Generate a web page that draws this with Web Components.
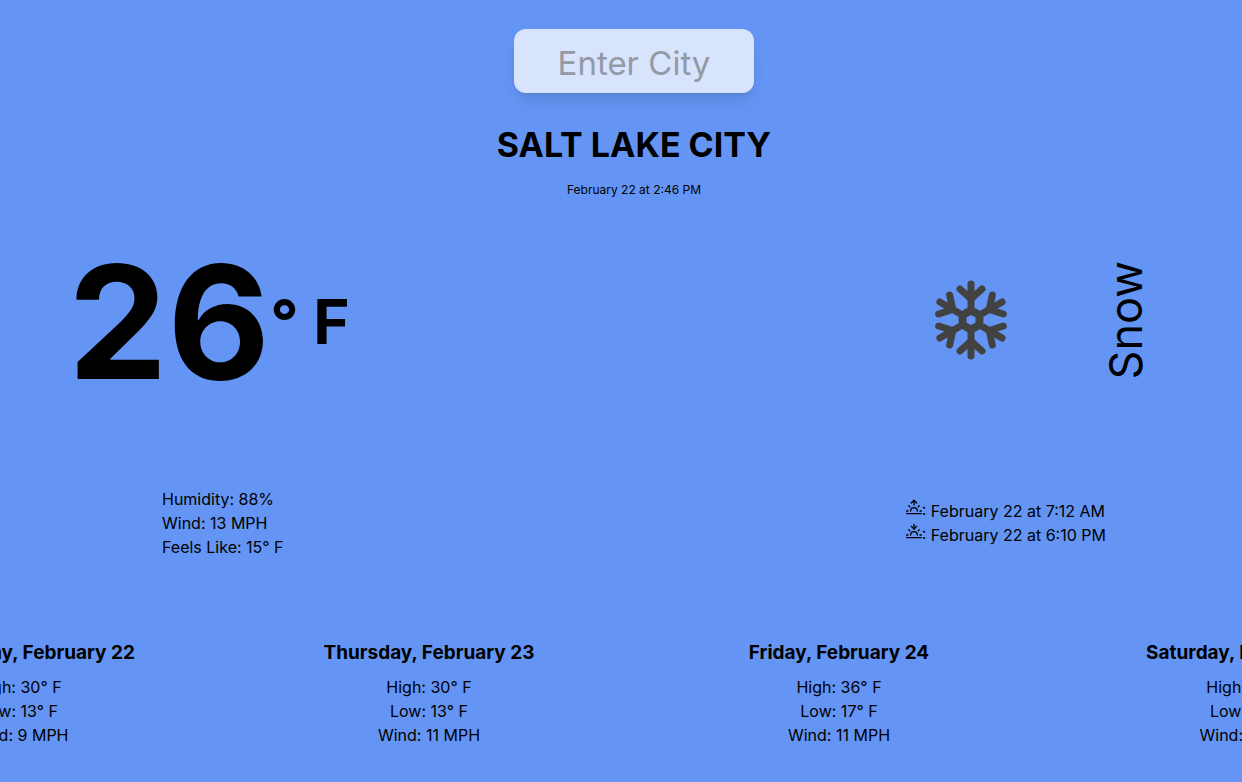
<!DOCTYPE html>
<html lang="en">
<head>
<meta charset="utf-8">
<meta name="viewport" content="width=device-width, initial-scale=1">
<title>Weather</title>
<style>
  html { background: #6495f4; }
  body {
    margin: 0;
    overflow: hidden;
    color: #000;
    font: 16px/24px Inter, "Liberation Sans", sans-serif;
  }
</style>
</head>
<body>
<weather-app></weather-app>
<script>
  const define = (name, html, setup) => {
    const template = document.createElement('template');
    template.innerHTML = html;
    customElements.define(name, class extends HTMLElement {
      constructor() {
        super();
        this.attachShadow({ mode: 'open' }).append(template.content.cloneNode(true));
      }
      connectedCallback() {
        if (setup) setup(this.shadowRoot, this);
      }
    });
  };

  define('city-search', `
    <style>
      :host { display: block; }
      input {
        box-sizing: border-box;
        display: block;
        width: 240px;
        height: 64px;
        padding: 4px 0 0;
        border: 0;
        border-radius: 12px;
        outline: 0;
        background: rgba(255, 255, 255, .75);
        box-shadow: 0 10px 15px -3px rgba(0, 0, 0, .1), 0 4px 6px -4px rgba(0, 0, 0, .1);
        color: #000;
        font: inherit;
        font-size: 33px;
        line-height: 40px;
        text-align: center;
      }
      input::placeholder { color: #9399a5; opacity: 1; }
    </style>
    <input type="text" placeholder="Enter City" aria-label="Enter City">`);

  define('city-heading', `
    <style>
      :host { display: block; text-align: center; }
      h1 { margin: 0; font-size: 34px; line-height: 40px; font-weight: 700; }
      p { margin: 16px 0 0; font-size: 12px; line-height: 18px; }
    </style>
    <h1><slot></slot></h1>
    <p><slot name="time"></slot></p>`);

  define('current-temperature', `
    <style>
      :host { display: flex; align-items: center; padding-top: 4px; font-weight: 700; }
      .value { font-size: 158px; line-height: 160px; }
      .unit { font-size: 62px; line-height: 64px; }
    </style>
    <span class="value"><slot></slot></span>
    <span class="unit"><slot name="unit"></slot></span>`);

  define('snow-icon', `
    <style>
      :host { display: block; width: 80px; height: 80px; }
      svg { display: block; width: 100%; height: 100%; }
    </style>
    <svg viewBox="-40 -40 80 80" fill="none" stroke="#424242" stroke-width="7" stroke-linecap="round" stroke-linejoin="round" aria-hidden="true">
      <defs><path id="arm" d="M0-10V-36M-11-31 0-21 11-31"/></defs>
      <path d="M0-9 8-5V5L0 9-8 5V-5Z"/>
      <circle r="9"/>
      <use href="#arm"/><use href="#arm" transform="rotate(60)"/>
      <use href="#arm" transform="rotate(120)"/><use href="#arm" transform="rotate(180)"/>
      <use href="#arm" transform="rotate(240)"/><use href="#arm" transform="rotate(300)"/>
    </svg>`);

  define('current-condition', `
    <style>
      :host { display: flex; align-items: center; gap: 91px; }
      .label {
        writing-mode: vertical-rl;
        transform: rotate(180deg);
        font-size: 45px;
        line-height: 48px;
      }
    </style>
    <snow-icon></snow-icon>
    <span class="label"><slot></slot></span>`);

  define('sun-time', `
    <style>
      :host { display: flex; align-items: flex-start; }
      svg { width: 16px; height: 16px; flex: none; }
    </style>
    <svg viewBox="0 0 24 24" fill="none" stroke="currentColor" stroke-width="2" stroke-linecap="round" stroke-linejoin="round" aria-hidden="true">
      <path d="M17 18a5 5 0 0 0-10 0M12 2V9M4.22 10.22l1.42 1.42M1 18h2M21 18h2M18.36 11.64l1.42-1.42M23 22H1"/>
      <path class="arrow"/>
    </svg><span>: <slot></slot></span>`,
    (root, host) => root.querySelector('.arrow').setAttribute('d',
      host.getAttribute('kind') === 'sunset' ? 'M16 5l-4 4-4-4' : 'M8 6l4-4 4 4'));

  define('forecast-day', `
    <style>
      :host { display: block; text-align: center; }
      h2 { margin: 0 0 8px; font-size: 19px; line-height: 28px; font-weight: 700; }
    </style>
    <h2><slot name="day"></slot></h2>
    <slot></slot>`);

  define('weather-app', `
    <style>
      :host { display: block; padding: 29px 0 0 26px; }
      header { display: flex; flex-direction: column; align-items: center; gap: 32px; }
      .now { display: flex; justify-content: space-between; align-items: center; margin: 39px 92px 0 42px; }
      .details { display: flex; justify-content: space-between; align-items: center; margin: 85px 136px 0; }
      .forecast {
        display: grid;
        grid-template-columns: repeat(4, 410px);
        justify-content: center;
        margin-top: 80px;
        padding-bottom: 32px;
      }
    </style>
    <header>
      <city-search></city-search>
      <city-heading>SALT LAKE CITY<span slot="time">February 22 at 2:46 PM</span></city-heading>
    </header>
    <section class="now">
      <current-temperature>26<span slot="unit">° F</span></current-temperature>
      <current-condition>Snow</current-condition>
    </section>
    <section class="details">
      <div>
        <div>Humidity: 88%</div>
        <div>Wind: 13 MPH</div>
        <div>Feels Like: 15° F</div>
      </div>
      <div>
        <sun-time kind="sunrise">February 22 at 7:12 AM</sun-time>
        <sun-time kind="sunset">February 22 at 6:10 PM</sun-time>
      </div>
    </section>
    <section class="forecast">
      <forecast-day><span slot="day">Wednesday, February 22</span>
        <div>High: 30° F</div><div>Low: 13° F</div><div>Wind: 9 MPH</div></forecast-day>
      <forecast-day><span slot="day">Thursday, February 23</span>
        <div>High: 30° F</div><div>Low: 13° F</div><div>Wind: 11 MPH</div></forecast-day>
      <forecast-day><span slot="day">Friday, February 24</span>
        <div>High: 36° F</div><div>Low: 17° F</div><div>Wind: 11 MPH</div></forecast-day>
      <forecast-day><span slot="day">Saturday, February 25</span>
        <div>High: 34° F</div><div>Low: 19° F</div><div>Wind: 8 MPH</div></forecast-day>
    </section>`);
</script>
</body>
</html>
